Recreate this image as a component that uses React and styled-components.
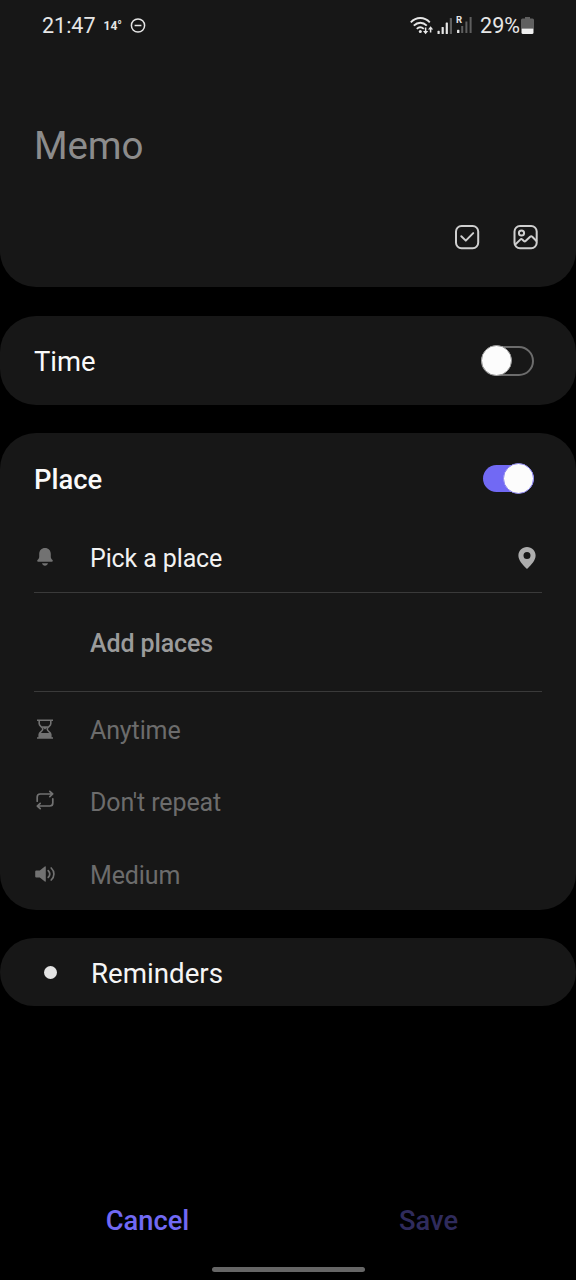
import React, { useState } from 'react';
import styled, { createGlobalStyle, css } from 'styled-components';

const accent = '#7169f4';
const surface = '#171717';

const GlobalStyle = createGlobalStyle`
  * {
    box-sizing: border-box;
  }

  body {
    margin: 0;
    background: #000;
    font-family: Roboto, 'Noto Sans', sans-serif;
  }
`;

const Screen = styled.div`
  display: flex;
  flex-direction: column;
  row-gap: 28px;
  width: 576px;
  height: 1280px;
  overflow: hidden;
  background: #000;
`;

const Card = styled.section`
  flex: none;
  height: ${({ height }) => height};
  border-radius: 36px;
  background: ${surface};
`;

const Header = styled.header`
  flex: none;
  height: 287px;
  margin-bottom: 1px;
  border-radius: 0 0 36px 36px;
  background: ${surface};
`;

const StatusBar = styled.div`
  display: flex;
  align-items: center;
  justify-content: space-between;
  height: 51px;
  padding: 0 42px;
  color: #e6e6e6;
`;

const StatusGroup = styled.div`
  display: flex;
  align-items: center;
  column-gap: ${({ gap }) => gap || 0};
`;

const StatusText = styled.span`
  font-size: 21.5px;
  line-height: 26px;
`;

const BatteryLevel = styled(StatusText)`
  margin: 0 -2px 0 4px;
`;

const Temperature = styled.span`
  margin: 0 8px;
  font-size: 12px;
  font-weight: 700;
  line-height: 26px;
`;

const MemoTitle = styled.h1`
  margin: 72px 0 0 34px;
  font-size: 38.5px;
  font-weight: 400;
  line-height: 46px;
  letter-spacing: -.1px;
  color: #8c8c8c;
`;

const Tools = styled.div`
  display: flex;
  justify-content: flex-end;
  column-gap: 33px;
  margin-top: 55px;
  padding-right: 37px;
`;

const IconButton = styled.button`
  display: flex;
  padding: 0;
  border: 0;
  background: none;
  color: #cfcfcf;
`;

const SwitchRow = styled.div`
  display: flex;
  align-items: center;
  justify-content: space-between;
  height: ${({ height }) => height};
  padding: 0 42px 0 34px;
`;

const SwitchLabel = styled.h2`
  margin: 0;
  padding-top: ${({ $bold }) => ($bold ? '4px' : '2px')};
  font-size: 27.4px;
  font-weight: ${({ $bold }) => ($bold ? 500 : 400)};
  line-height: 32px;
  color: #fafafa;
`;

const Track = styled.button`
  display: flex;
  align-items: center;
  width: 53px;
  height: 30px;
  padding: 0;
  border: 2px solid #6c6c6c;
  border-radius: 15px;
  background: ${surface};

  ${({ $on }) => $on && css`
    justify-content: flex-end;
    width: 51px;
    height: 27px;
    border: 0;
    background: ${accent};
  `}
`;

const Thumb = styled.span`
  flex: none;
  width: 31px;
  height: 31px;
  margin: ${({ $on }) => ($on ? 0 : '0 0 0 -2px')};
  border: 1px solid ${({ $on }) => ($on ? '#8e88ee' : '#999')};
  border-radius: 50%;
  background: #fcfcfc;
`;

const Divided = styled.div`
  margin: 0 34px;
  border-bottom: 1px solid #3a3a3a;
`;

const Row = styled.div`
  display: flex;
  align-items: center;
  height: ${({ height }) => height || '72.5px'};
  padding: ${({ $inset }) => ($inset ? '0 34px' : 0)};
  color: #727272;
`;

const RowIcon = styled.span`
  display: flex;
  flex: none;
  width: 56px;
  padding-bottom: 2px;
`;

const RowText = styled.span`
  flex: 1;
  padding-top: ${({ $drop }) => $drop || '2px'};
  font-size: 25px;
  font-weight: ${({ weight }) => weight || 400};
  line-height: 30px;
  letter-spacing: -.12px;
  color: ${({ color }) => color || '#6c6c6c'};
`;

const Options = styled.div`
  padding-top: 1.5px;
`;

const PinSlot = styled.span`
  display: flex;
  padding-right: 6px;
`;

const ReminderRow = styled.div`
  display: flex;
  align-items: center;
  height: 68px;
  padding-left: 44px;
`;

const Dot = styled.span`
  width: 13px;
  height: 13px;
  margin-right: 34px;
  border-radius: 50%;
  background: #e4e4e4;
`;

const ReminderText = styled.span`
  padding-top: 4px;
  font-size: 27.7px;
  line-height: 32px;
  color: #f5f5f5;
`;

const Footer = styled.footer`
  display: flex;
  flex-direction: column;
  align-items: center;
  margin-top: auto;
`;

const Actions = styled.div`
  display: grid;
  grid-template-columns: 1fr 1fr;
  width: 562px;
  margin-bottom: 30px;
`;

const Action = styled.button`
  padding: 0;
  border: 0;
  background: none;
  font-family: inherit;
  font-size: 27.3px;
  font-weight: 500;
  line-height: 32px;
  color: ${accent};

  &:disabled {
    color: #2f2b5c;
  }
`;

const HomeBar = styled.div`
  width: 153px;
  height: 5px;
  margin-bottom: 8px;
  border-radius: 3px;
  background: #666;
`;

const DoNotDisturb = () => (
  <svg width="16" height="16" viewBox="0 0.5 16 16" fill="none" stroke="currentColor" strokeWidth="1.5">
    <circle cx="8" cy="8" r="6.6" />
    <path d="M4.6 8h6.8" />
  </svg>
);

const Wifi = () => (
  <svg width="24" height="20" viewBox="0 0 24 20" fill="none" stroke="currentColor" strokeWidth="1.9">
    <path d="M.8 6.3C6.3.6 14.3.6 19.8 6.3M3.8 9.7c4-4 9-4 13 0M6.8 12.9c2.3-2.2 4.6-2.2 7 0" />
    <circle cx="10.3" cy="15.6" r="1.5" fill="currentColor" stroke="none" />
    <path d="M15.6 11.5v5M20.6 16.5v-4" strokeWidth="1.5" />
    <path d="M13 15h5.2l-2.6 3.2zM18 13.4h5.2l-2.6-3.2z" fill="currentColor" stroke="none" />
  </svg>
);

const Signal = ({ strength }) => (
  <svg width="16" height="18" viewBox="0 1 16 18" fill="currentColor">
    {[3.2, 7, 11.5, 16].map((h, i) => (
      <rect key={h} x={0.5 + i * 4.1} y={18 - h} width="2.2" height={h} rx=".6" opacity={i < strength ? 1 : 0.35} />
    ))}
  </svg>
);

const RoamingSignal = () => (
  <svg width="17" height="21" viewBox="0 1 17 21" fill="currentColor">
    <text x="0" y="8.5" fontSize="9.5" fontWeight="700">R</text>
    <rect x="1" y="15.8" width="2.4" height="3.2" rx=".6" />
    <rect x="5.2" y="12" width="2" height="7" opacity=".35" />
    <rect x="9.4" y="7.5" width="2" height="11.5" opacity=".35" />
    <rect x="13.6" y="3" width="2" height="16" opacity=".35" />
  </svg>
);

const Battery = () => (
  <svg width="13" height="18" viewBox="0 0.5 13 18">
    <path d="M4 0h5v2h2.5Q13 2 13 3.5V12H0V3.5Q0 2 1.5 2H4z" fill="#606060" />
    <path d="M.5 12h12v4q0 1.5-1.5 1.5H2Q.5 17.5.5 16z" fill="#f0f0f0" />
  </svg>
);

const Checklist = () => (
  <svg width="26" height="26" viewBox="0 0 26 26" fill="none" stroke="currentColor" strokeWidth="2">
    <rect x="2" y="2" width="22.2" height="22.2" rx="5.5" />
    <path d="M7.3 12.3l4.5 4.3 7.4-7.5" strokeLinecap="round" strokeLinejoin="round" />
  </svg>
);

const Picture = () => (
  <svg width="26" height="26" viewBox="0.5 0 26 26" fill="none" stroke="currentColor" strokeWidth="2">
    <rect x="2" y="2" width="22.2" height="22.2" rx="5.5" />
    <circle cx="9" cy="9" r="2.6" />
    <path d="M2.5 20.8l5.3-5.2q1-1 2 0l1.5 1.4q1 .8 1.8 0l4.5-4.2q1.1-1 2.2 0l4.4 4.4" />
  </svg>
);

const Bell = () => (
  <svg width="22" height="20" viewBox="0 0 22 20" fill="currentColor">
    <path d="M11 1C7.5 1 5.2 3.6 5.2 7v2.8c0 1.5-.7 2.2-1.5 3-.9.9-.7 1.9.6 1.9h13.4c1.3 0 1.5-1 .6-1.9-.8-.8-1.5-1.5-1.5-3V7c0-3.4-2.3-6-5.8-6zM8 16.3h6c-.4 1.6-1.5 2.4-3 2.4s-2.6-.8-3-2.4z" />
  </svg>
);

const Pin = () => (
  <svg width="18" height="22" viewBox="0 0 18 22" fill="#adadad">
    <path fillRule="evenodd" d="M9 0C4.1 0 .4 3.7.4 8.5.4 13 4 17.2 9 22c5-4.8 8.6-9 8.6-13.5C17.6 3.7 13.9 0 9 0zm0 4.9a3.5 3.5 0 1 1 0 7 3.5 3.5 0 0 1 0-7z" />
  </svg>
);

const Hourglass = () => (
  <svg width="22" height="22" viewBox="0 0 22 22" fill="none" stroke="currentColor" strokeWidth="1.6">
    <path d="M3 2.3h16M3 20h16" />
    <path d="M5.2 2.5v3.2c0 2.6 3.6 3 3.6 5.4s-3.6 2.8-3.6 5.4V20M16.8 2.5v3.2c0 2.6-3.6 3-3.6 5.4s3.6 2.8 3.6 5.4V20" />
    <path d="M5.2 15h11.6v5H5.2zM7.6 8.2h6.8L11 11.6z" fill="currentColor" stroke="none" />
  </svg>
);

const Repeat = () => (
  <svg width="22" height="22" viewBox="0 1 22 22" fill="none" stroke="currentColor" strokeWidth="1.7" strokeLinecap="round" strokeLinejoin="round">
    <path d="M3.2 12.2V8q0-3 3-3h12M15.8 2.4L18.7 5l-2.9 2.7" />
    <path d="M18.8 9.8V14q0 3-3 3h-12M6.2 14.3L3.3 17l2.9 2.6" />
  </svg>
);

const Volume = () => (
  <svg width="22" height="20" viewBox="0 0 22 20" fill="none" stroke="currentColor" strokeWidth="1.7" strokeLinecap="round">
    <path d="M2.2 6.5h3.6l5-4.1q1-.7 1 .5v14.2q0 1.2-1 .5l-5-4.1H2.2q-1 0-1-1v-5q0-1 1-1z" fill="currentColor" stroke="none" />
    <path d="M14.2 6.6c1.9 2 1.9 4.8 0 6.8M17.2 4c3.6 3.4 3.6 8.6 0 12" />
  </svg>
);

const options = [
  { label: 'Anytime', Icon: Hourglass },
  { label: "Don't repeat", Icon: Repeat },
  { label: 'Medium', Icon: Volume },
];

const Switch = ({ on, onToggle, label }) => (
  <Track $on={on} onClick={onToggle} role="switch" aria-checked={on} aria-label={label}>
    <Thumb $on={on} />
  </Track>
);

export default function App() {
  const [time, setTime] = useState(false);
  const [place, setPlace] = useState(true);

  return (
    <Screen>
      <GlobalStyle />
      <Header>
        <StatusBar>
          <StatusGroup>
            <StatusText>21:47</StatusText>
            <Temperature>14°</Temperature>
            <DoNotDisturb />
          </StatusGroup>
          <StatusGroup gap="3px">
            <Wifi />
            <Signal strength={3} />
            <RoamingSignal />
            <BatteryLevel>29%</BatteryLevel>
            <Battery />
          </StatusGroup>
        </StatusBar>
        <MemoTitle>Memo</MemoTitle>
        <Tools>
          <IconButton><Checklist /></IconButton>
          <IconButton><Picture /></IconButton>
        </Tools>
      </Header>

      <Card height="89px">
        <SwitchRow height="89px">
          <SwitchLabel>Time</SwitchLabel>
          <Switch label="Time" on={time} onToggle={() => setTime(!time)} />
        </SwitchRow>
      </Card>

      <Card height="477px">
        <SwitchRow height="90px">
          <SwitchLabel $bold>Place</SwitchLabel>
          <Switch label="Place" on={place} onToggle={() => setPlace(!place)} />
        </SwitchRow>
        <Divided>
          <Row height="69px">
            <RowIcon><Bell /></RowIcon>
            <RowText color="#f2f2f2">Pick a place</RowText>
            <PinSlot><Pin /></PinSlot>
          </Row>
        </Divided>
        <Divided>
          <Row height="98px">
            <RowIcon />
            <RowText weight={500} color="#9b9b9b" $drop="4px">Add places</RowText>
          </Row>
        </Divided>
        <Options>
          {options.map(({ label, Icon }) => (
            <Row key={label} $inset>
              <RowIcon><Icon /></RowIcon>
              <RowText>{label}</RowText>
            </Row>
          ))}
        </Options>
      </Card>

      <Card height="68px">
        <ReminderRow>
          <Dot />
          <ReminderText>Reminders</ReminderText>
        </ReminderRow>
      </Card>

      <Footer>
        <Actions>
          <Action>Cancel</Action>
          <Action disabled>Save</Action>
        </Actions>
        <HomeBar />
      </Footer>
    </Screen>
  );
}
